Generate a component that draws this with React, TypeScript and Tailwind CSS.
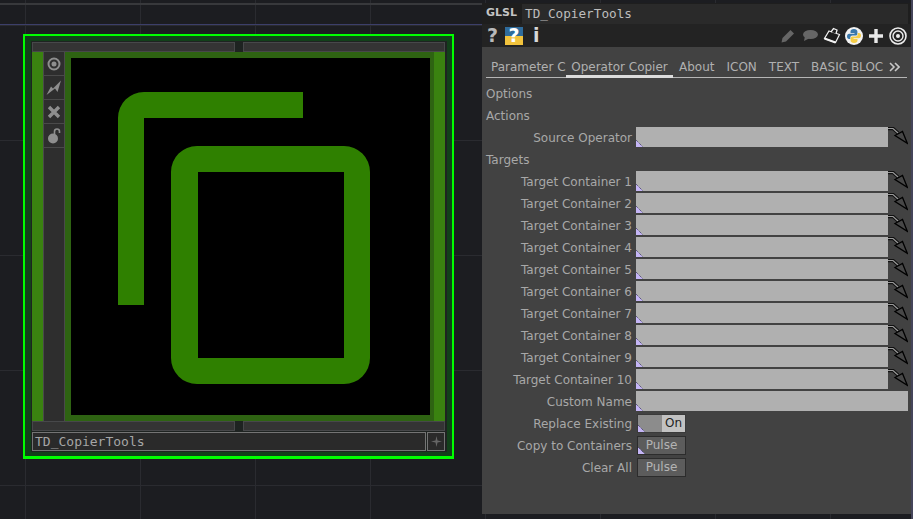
const labelFont = "font-['DejaVu_Sans',sans-serif]";

const targets = [1, 2, 3, 4, 5, 6, 7, 8, 9, 10];

const Corner = () => (
  <svg width="7" height="7" viewBox="0 0 7 7" className="absolute bottom-0 left-0">
    <path d="M0 0 L7 7 L0 7 Z" fill="#c4b5f5" />
    <path d="M0 0 L7 7" stroke="#3a3560" strokeWidth="1" strokeDasharray="1 1" />
  </svg>
);

const DropArrow = () => (
  <svg width="20" height="20" viewBox="0 0 20 20" className="shrink-0">
    <path d="M0 1.5 H5 L10 6" fill="none" stroke="#111" strokeWidth="3.4" />
    <path d="M0 1.5 H5 L10 6" fill="none" stroke="#999" strokeWidth="1.2" />
    <path d="M7 8.5 L14.5 4.5 L19.3 16.3 Z" fill="#474747" stroke="#000" strokeWidth="1.3" />
  </svg>
);

const Row = ({ label, children }: { label: string; children: React.ReactNode }) => (
  <div className="flex h-[22px] items-center">
    <div className="w-[154px] shrink-0 pr-1 pt-[2px] text-right text-[12px] text-[#a8a8a8]">{label}</div>
    {children}
  </div>
);

const Heading = ({ label }: { label: string }) => (
  <div className="flex h-[22px] items-center pl-1 pt-[2px] text-[12px] text-[#a8a8a8]">{label}</div>
);

const Field = ({ wide }: { wide?: boolean }) => (
  <div className={`relative h-[20px] bg-[#b0b0b0] ${wide ? "w-[272px]" : "w-[252px]"}`}>
    <Corner />
  </div>
);

const PulseButton = ({ corner }: { corner?: boolean }) => (
  <div className="relative ml-px flex h-[19px] w-[49px] items-center justify-center border border-[#2c2c2c] bg-[#5c5c5c] text-[12px] text-[#b4b4b4]">
    Pulse
    {corner && <Corner />}
  </div>
);

const SideButton = ({ children }: { children: React.ReactNode }) => (
  <div className="flex h-[24px] items-center justify-center border-b border-[#4a4a4a]">{children}</div>
);

const PythonLogo = () => (
  <svg width="18" height="18" viewBox="0 0 18 18" className="ml-[4px]">
    <circle cx="9" cy="9" r="9" fill="#f2f2f2" />
    <path d="M9 2 C6.5 2 5.5 3 5.5 4.5 V6 H9.5 V6.8 H4.2 C2.8 6.8 2 8 2 9.5 C2 11 2.8 12 4 12 H5.3 V10.5 C5.3 9.2 6.3 8.5 7.4 8.5 H10.6 C11.7 8.5 12.4 7.7 12.4 6.7 V4.5 C12.4 3 11 2 9 2 Z" fill="#3a78ab" />
    <path d="M9 16 C11.5 16 12.5 15 12.5 13.5 V12 H8.5 V11.2 H13.8 C15.2 11.2 16 10 16 8.5 C16 7 15.2 6 14 6 H12.7 V7.5 C12.7 8.8 11.7 9.5 10.6 9.5 H7.4 C6.3 9.5 5.6 10.3 5.6 11.3 V13.5 C5.6 15 7 16 9 16 Z" fill="#f5cd46" />
  </svg>
);

const ParameterPanel = () => (
  <div className={`mt-[3px] flex h-[511px] w-[429px] flex-col bg-[#424242] ${labelFont}`}>
    {/* name bar */}
    <div className="flex h-[21px] shrink-0 items-center bg-[#1e1e1e] pl-1">
      <span className="w-[36px] text-[11px] font-bold text-[#c4c4c4]">GLSL</span>
      <div className="flex h-[20px] w-[386px] items-center bg-[#2a2a2a] pl-[3px] font-['DejaVu_Sans_Mono',monospace] text-[12.7px] text-[#bdbdbd]">
        TD_CopierTools
      </div>
    </div>

    {/* toolbar */}
    <div className="flex h-[23px] shrink-0 items-center bg-[#232323] pl-[5px] pr-[4px]">
      <span className="w-[12px] text-[19px] font-bold leading-none text-[#b9b9b9]">?</span>
      <div className="ml-[6px] flex h-[18px] w-[18px] items-center justify-center bg-[linear-gradient(#2f6c9c_50%,#f2c33d_50%)] text-[19px] font-bold leading-none text-white">
        ?
      </div>
      <span className="ml-[10px] text-[19px] font-bold leading-none text-[#d8d8d8]">i</span>
      <div className="ml-auto flex items-center">
        <svg width="14" height="14" viewBox="0 0 14 14">
          <path d="M0.5 13.5 L1.5 9 L9.5 1 L13 4.5 L5 12.5 Z" fill="#666" />
        </svg>
        <svg width="16" height="11" viewBox="0 0 16 11" className="ml-[7px]">
          <ellipse cx="8.5" cy="4.5" rx="7.5" ry="4.5" fill="#666" />
          <path d="M3 6 L2 11 L7 8.5 Z" fill="#666" />
        </svg>
        <svg width="18" height="17" viewBox="0 0 18 17" className="ml-[5px]">
          <path d="M6 4 L16.5 7.5 L12.5 15.5 L1.5 11.5 Z" fill="#1c1c1c" stroke="#f2f2f2" strokeWidth="1.2" />
          <path d="M1.5 11.5 L12.5 15.5" stroke="#f2f2f2" strokeWidth="2" />
          <path d="M8 5 L10.5 1.5 L14 3 L13 6.5" fill="#1c1c1c" stroke="#f2f2f2" strokeWidth="1.3" />
        </svg>
        <PythonLogo />
        <svg width="14" height="14" viewBox="0 0 14 14" className="ml-[6px]">
          <path d="M7 0 V14 M0 7 H14" stroke="#e8e8e8" strokeWidth="3.4" />
        </svg>
        <svg width="18" height="18" viewBox="0 0 18 18" fill="none" className="ml-[6px]">
          <circle cx="9" cy="9" r="8" stroke="#ececec" strokeWidth="1.6" />
          <circle cx="9" cy="9" r="5" stroke="#ececec" strokeWidth="1.4" />
          <circle cx="9" cy="9" r="2" fill="#ececec" />
        </svg>
      </div>
    </div>

    {/* tabs */}
    <div className="ml-1 mr-[4px] mt-[4px] flex h-[27px] shrink-0 items-stretch border-b border-[#b5b5b5] pt-[5px] text-[12px] text-[#b0b0b0]">
      <div className="flex w-[80px] items-center overflow-hidden whitespace-nowrap pl-[5px]">Parameter C</div>
      <div className="-mb-px flex w-[107px] items-center justify-center border-b-[3px] border-[#dcdcdc] pt-[2px]">Operator Copier</div>
      <div className="ml-[6px] flex items-center">About</div>
      <div className="ml-[12px] flex items-center">ICON</div>
      <div className="ml-[12px] flex items-center">TEXT</div>
      <div className="ml-[12px] flex w-[73px] items-center overflow-hidden whitespace-nowrap">BASIC BLOC</div>
      <div className="ml-[5px] flex items-center">
        <svg width="11" height="10" viewBox="0 0 11 10" fill="none" stroke="#c8c8c8" strokeWidth="1.6">
          <path d="M1 1 L5 5 L1 9 M6 1 L10 5 L6 9" />
        </svg>
      </div>
    </div>

    {/* parameters */}
    <div className="mt-[4px] flex flex-col">
      <Heading label="Options" />
      <Heading label="Actions" />
      <Row label="Source Operator">
        <Field />
        <DropArrow />
      </Row>
      <Heading label="Targets" />
      {targets.map((n) => (
        <Row key={n} label={`Target Container ${n}`}>
          <Field />
          <DropArrow />
        </Row>
      ))}
      <Row label="Custom Name">
        <Field wide />
      </Row>
      <Row label="Replace Existing">
        <div className="relative ml-px flex h-[19px] w-[49px] border border-[#3a3a3a]">
          <div className="w-[24px] bg-[#8c8c8c]" />
          <div className="flex flex-1 items-center justify-center bg-[#c2c2c2] text-[12px] text-[#222]">On</div>
          <Corner />
        </div>
      </Row>
      <Row label="Copy to Containers">
        <PulseButton corner />
      </Row>
      <Row label="Clear All">
        <PulseButton />
      </Row>
    </div>
  </div>
);

const CopierNode = () => (
  <div className="h-[425px] w-[431px] border-2 border-b-[3px] border-[#00ff00] bg-[#12401a] pb-[4px] pl-[6px] pr-[5px] pt-[5px]">
    <div className="flex h-[411px] w-[416px] flex-col bg-[#1e2321] pb-px pl-px pr-[2px] pt-px">
      {/* top connector strips */}
      <div className="flex h-[10px] shrink-0 gap-[8px]">
        <div className="w-[203px] border border-[#47484a] bg-[#343434]" />
        <div className="flex-1 border border-[#47484a] bg-[#343434]" />
      </div>

      <div className="flex flex-1">
        <div className="w-[11px] bg-[#3a8210]" />
        <div className="flex w-[22px] flex-col border-x border-[#4a4a4a] bg-[#2e2e2e]">
          <SideButton>
            <svg width="14" height="14" viewBox="0 0 14 14" fill="none">
              <circle cx="7" cy="7" r="5.5" stroke="#8e8e8e" strokeWidth="2" />
              <circle cx="7" cy="7" r="2.5" fill="#8e8e8e" />
            </svg>
          </SideButton>
          <SideButton>
            <svg width="16" height="16" viewBox="0 0 16 16">
              <path d="M0.5 15 L5 6.5 L7 8.5 L15 0.5 L11.5 12 L9 8.5 Z" fill="#8e8e8e" />
            </svg>
          </SideButton>
          <SideButton>
            <svg width="14" height="14" viewBox="0 0 14 14">
              <path d="M2 2 L12 12 M12 2 L2 12" stroke="#8e8e8e" strokeWidth="3.4" />
            </svg>
          </SideButton>
          <SideButton>
            <svg width="14" height="16" viewBox="0 0 14 16" fill="none">
              <circle cx="6" cy="10.5" r="5" fill="#8e8e8e" />
              <path d="M7.5 6 V3.5 A2.5 2.5 0 0 1 12.5 3.5 V5" stroke="#8e8e8e" strokeWidth="1.6" />
            </svg>
          </SideButton>
        </div>
        <div className="border-b-[6px] border-l-[6px] border-r-[4px] border-t-[6px] border-[#2e6312] bg-black">
          <svg width="359" height="357" viewBox="0 0 359 357" className="block">
            <path d="M232 34 H73 A26 26 0 0 0 47 60 V247 H73 V60 H232 Z" fill="#2f8000" />
            <path
              fillRule="evenodd"
              d="M126 88 H273 A26 26 0 0 1 299 114 V300 A26 26 0 0 1 273 326 H126 A26 26 0 0 1 100 300 V114 A26 26 0 0 1 126 88 Z M127 114 V300 H273 V114 Z"
              fill="#2f8000"
            />
          </svg>
        </div>
        <div className="w-[11px] bg-[#3a8210]" />
      </div>

      {/* bottom connector strips */}
      <div className="flex h-[10px] shrink-0 gap-[8px]">
        <div className="w-[203px] border border-[#47484a] bg-[#343434]" />
        <div className="flex-1 border border-[#47484a] bg-[#343434]" />
      </div>

      {/* name strip */}
      <div className="mt-[1px] flex h-[19px] shrink-0 gap-[1px]">
        <div className="flex flex-1 items-center border border-[#747474] bg-[#2a2a2a] px-[2px] font-['DejaVu_Sans_Mono',monospace] text-[13px] text-[#a6a6a6]">
          TD_CopierTools
        </div>
        <div className="flex w-[18px] items-center justify-center border border-[#747474] bg-[#2a2a2a]">
          <svg width="11" height="11" viewBox="0 0 11 11">
            <path d="M5.5 0 L6.5 4.5 L11 5.5 L6.5 6.5 L5.5 11 L4.5 6.5 L0 5.5 L4.5 4.5 Z" fill="#666" />
          </svg>
        </div>
      </div>
    </div>
  </div>
);

export default function App() {
  return (
    <div className="relative flex h-[519px] w-[913px] overflow-hidden bg-[#1c1d21] bg-[linear-gradient(to_right,#2a2b30_1px,transparent_1px),linear-gradient(to_bottom,#2a2b30_1px,transparent_1px)] bg-[length:115px_115px] bg-[position:25px_25px]">
      {/* network editor canvas */}
      <div className="relative h-full w-[482px] pl-[23px] pt-[34px]">
        <div className="absolute left-0 right-0 top-[3px] h-[2px] bg-[#38393c]" />
        <div className="absolute left-0 right-0 top-[24px] h-px bg-[#3c3f6a]" />
        <CopierNode />
      </div>
      <ParameterPanel />
      <div className="h-full w-[2px] bg-[#45455a]" />
    </div>
  );
}
